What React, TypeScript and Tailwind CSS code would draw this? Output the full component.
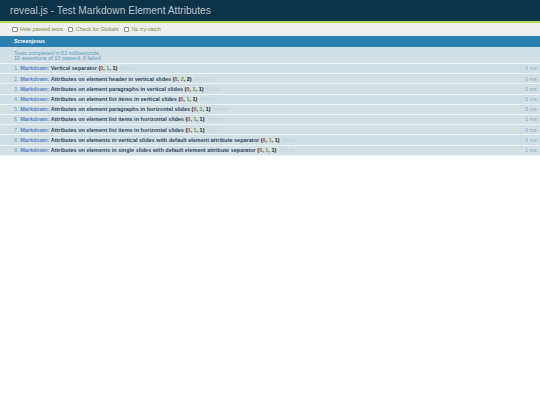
import React from 'react';

const tests: [string, number, number, string][] = [
  ['Vertical separator', 1, 1, '0 ms'],
  ['Attributes on element header in vertical slides', 2, 2, '0 ms'],
  ['Attributes on element paragraphs in vertical slides', 1, 1, '0 ms'],
  ['Attributes on element list items in vertical slides', 1, 1, '0 ms'],
  ['Attributes on element paragraphs in horizontal slides', 1, 1, '0 ms'],
  ['Attributes on element list items in horizontal slides', 1, 1, '1 ms'],
  ['Attributes on element list items in horizontal slides', 1, 1, '0 ms'],
  ['Attributes on elements in vertical slides with default element attribute separator', 1, 1, '0 ms'],
  ['Attributes on elements in single slides with default element attribute separator', 1, 1, '1 ms'],
];

const Check = ({ label }: { label: string }) => (
  <span className="flex items-center gap-[2.5px]">
    <span className="w-[5.5px] h-[5.5px] bg-white border-[0.5px] border-[#8a8a8a] rounded-[1px]" />
    <span>{label}</span>
  </span>
);

export default function App() {
  return (
    <div className="min-h-[405px] bg-white font-['Liberation_Sans',sans-serif]">
      <h1 className="h-[22.5px] bg-[#0d3349] border-b-2 border-[#b5d95c] pl-[10px] pt-[3.5px] text-[10.2px] leading-[14px] text-[#b8c5cc]">
        reveal.js - Test Markdown Element Attributes
      </h1>
      <div className="h-[13.5px] bg-[#eeeeee] pl-[12px] pt-[0.5px] flex items-center gap-[5px] text-[5.4px] text-[#7d8f3c]">
        <Check label="Hide passed tests" />
        <Check label="Check for Globals" />
        <Check label="No try-catch" />
      </div>
      <h2 className="h-[11px] bg-[#2b81af] pl-[14px] text-[5.25px] leading-[11px] font-bold text-white">
        Screenjesus
      </h2>
      <div className="h-[17px] bg-[#d2e0e6] pl-[14px] pt-[3.5px] text-[5.5px] leading-[5.5px] text-[#5a9ac0] border-b border-[#eef3f5]">
        <div>Tests completed in 62 milliseconds.</div>
        <div>10 assertions of 10 passed, 0 failed.</div>
      </div>
      <ol>
        {tests.map(([name, a, b, time], i) => (
          <li
            key={i}
            className="h-[10.2px] bg-[#d2e0e6] border-b border-[#eef3f5] pl-[14px] pr-[3px] flex items-center justify-between text-[5.5px] text-[#6a9fc5]"
          >
            <span className="flex items-center gap-[3px] whitespace-nowrap">
              <span>
                {i + 1}. <b className="text-[#5580c8]">Markdown:</b>{' '}
                <b className="text-[#33475c]">{name}</b>{' '}
                <b className="text-[#222222]">
                  (<span className="text-[#a84848]">0</span>, <span className="text-[#6f9a35]">{a}</span>, {b})
                </b>
              </span>
              <span className="text-[#c3d0d8]">Rerun</span>
            </span>
            <span className="text-[#8fa9cc]">{time}</span>
          </li>
        ))}
      </ol>
    </div>
  );
}
